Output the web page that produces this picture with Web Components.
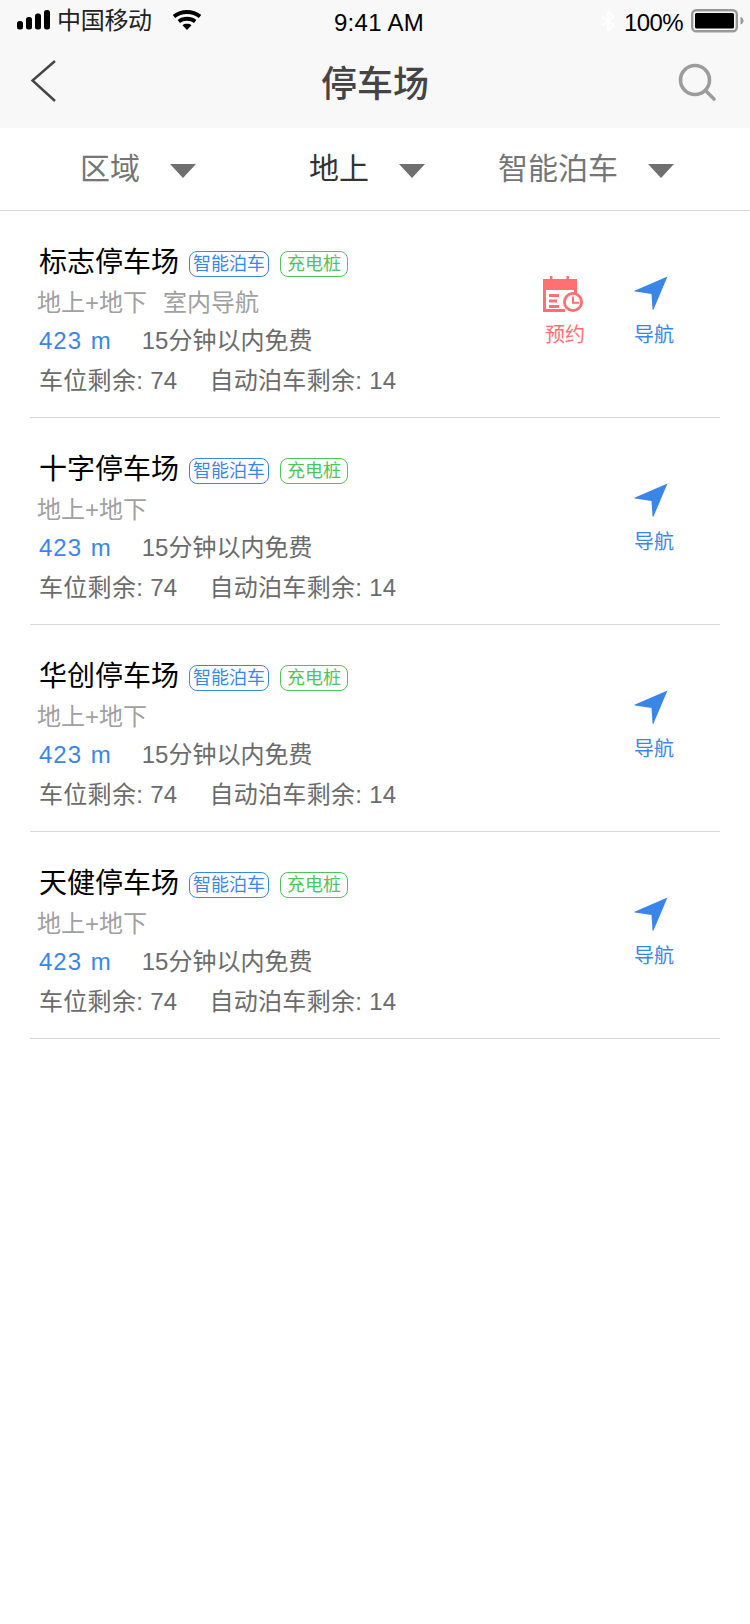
<!DOCTYPE html>
<html>
<head>
<meta charset="utf-8">
<style>
  html,body{margin:0;padding:0;background:#fff}
  body{font-family:"Liberation Sans","Noto Sans CJK SC",sans-serif;width:750px;height:1624px;overflow:hidden}
</style>
</head>
<body>
<app-header></app-header>
<filter-bar>
  <filter-item label="区域"></filter-item>
  <filter-item label="地上" dark></filter-item>
  <filter-item label="智能泊车"></filter-item>
</filter-bar>
<parking-row name="标志停车场" sub="地上+地下" extra="室内导航" book></parking-row>
<parking-row name="十字停车场" sub="地上+地下"></parking-row>
<parking-row name="华创停车场" sub="地上+地下"></parking-row>
<parking-row name="天健停车场" sub="地上+地下"></parking-row>

<script>
class appHeader extends HTMLElement{
    constructor(){
        super()
        this.attachShadow({mode:'open'});
    }
    connectedCallback(){
        this.shadowRoot.innerHTML=`
        <style>
          :host{display:block;height:128px;background:#f8f8f8;color:#000}
          .status{height:46px;display:grid;grid-template-columns:1fr auto 1fr;align-items:center;font-size:24px;padding:0 5px 0 17px}
          .left{display:flex;align-items:center}
          .carrier{margin-left:7px;font-size:24px;letter-spacing:-.3px;line-height:38px;color:#222;position:relative;top:-2px}
          .wifi{margin-left:21px;position:relative;top:-3px}
          .signal{position:relative;top:-3px}
          .time{position:relative;left:-2px;letter-spacing:.3px}
          .right{display:flex;align-items:center;justify-content:flex-end;position:relative;top:-2px}
          .pct{margin:0 8px 0 9px;letter-spacing:-.6px;position:relative;top:2px}
          .nav{height:82px;display:flex;align-items:center;justify-content:space-between;padding:0 33px 0 30px;position:relative}
          h1{position:absolute;left:0;right:0;top:19px;margin:0;text-align:center;font-size:36px;line-height:40px;font-weight:500;color:#444}
          .back{position:relative;top:-6px}
          .search{position:relative;top:-5px}
        </style>
        <div class="status">
          <div class="left">
            <svg class="signal" width="33" height="20" viewBox="0 0 33 20"><rect x="0" y="11" width="6" height="8.500" rx="2.500"/><rect x="9" y="7" width="6" height="12.500" rx="2.500"/><rect x="18" y="3.500" width="6" height="16" rx="2.500"/><rect x="27" y="0" width="6" height="19.500" rx="2.500"/></svg>
            <span class="carrier">中国移动</span>
            <svg class="wifi" width="28" height="20" viewBox="0 0 28 20"><path d="M1 6.500C8.500 .5 19.500 .5 27 6.500" fill="none" stroke="#000" stroke-width="3.800"/><path d="M5.800 11.500C10.500 7.800 17.500 7.800 22.200 11.500" fill="none" stroke="#000" stroke-width="3.800"/><path d="M9.500 15.200C12 13.400 16 13.400 18.500 15.200L14 20Z"/></svg>
          </div>
          <div class="time">9:41 AM</div>
          <div class="right">
            <svg width="14" height="20" viewBox="0 0 14 20"><path d="M1 5.500l12 9-6 5V.5l6 5-12 9" fill="none" stroke="#fff" stroke-width="1.800"/></svg>
            <span class="pct">100%</span>
            <svg width="54" height="24" viewBox="0 0 54 24"><rect x="1.200" y="1.200" width="44.600" height="21" rx="4" fill="none" stroke="#999" stroke-width="2.400"/><rect x="4" y="4" width="39" height="15.500" rx="1.500"/><path d="M49.500 8c2 .5 3 2 3 3.700s-1 3.300-3 3.800z" fill="#999"/></svg>
          </div>
        </div>
        <div class="nav">
          <svg class="back" width="28" height="44" viewBox="0 0 28 44"><path d="M25 2L2.500 21.500 25 42" fill="none" stroke="#444" stroke-width="2.400"/></svg>
          <h1>停车场</h1>
          <svg class="search" width="40" height="40" viewBox="0 0 40 40"><circle cx="18" cy="18" r="14.500" fill="none" stroke="#9c9c9c" stroke-width="3.600"/><path d="M28.500 28.500L37 37" stroke="#9c9c9c" stroke-width="3.600" stroke-linecap="round"/></svg>
        </div>`;
    }
}

class filterBar extends HTMLElement{
    constructor(){
        super()
        this.attachShadow({mode:'open'});
    }
    connectedCallback(){
        this.shadowRoot.innerHTML=`
        <style>
          :host{display:grid;grid-template-columns:309px 189px 1fr;height:82px;border-bottom:1px solid #d9d9d9}
        </style>
        <slot></slot>`;
    }
}

class filterItem extends HTMLElement{
    constructor(){
        super()
        this.attachShadow({mode:'open'});
    }
    connectedCallback(){
        const dark=this.hasAttribute('dark');
        this.shadowRoot.innerHTML=`
        <style>
          :host{display:flex;align-items:center;gap:30px;font-size:30px;color:${dark?'#333':'#757575'}}
          :host(:first-child){padding-left:80px}
          span{position:relative;top:-3px}
          i{display:block;width:0;height:0;margin-top:4px;border-left:13px solid transparent;border-right:13px solid transparent;border-top:14px solid #6f6f6f}
        </style>
        <span>${this.getAttribute('label')}</span><i></i>`;
    }
}

class tagPill extends HTMLElement{
    constructor(){
        super()
        this.attachShadow({mode:'open'});
    }
    connectedCallback(){
        const c=this.getAttribute('color');
        this.shadowRoot.innerHTML=`
        <style>
          :host{display:inline-block;box-sizing:border-box;height:26px;line-height:24px;padding:0 ${this.getAttribute('pad')}px;margin-top:7px;border:1px solid ${c};border-radius:8px;color:${c};font-size:18px;white-space:nowrap}
        </style>
        <slot></slot>`;
    }
}

class parkingRow extends HTMLElement{
    constructor(){
        super()
        this.attachShadow({mode:'open'});
    }
    connectedCallback(){
        const extra=this.getAttribute('extra');
        this.shadowRoot.innerHTML=`
        <style>
          :host{display:block;margin:0 30px;height:207px;box-sizing:border-box;border-bottom:1px solid #d9d9d9;position:relative;padding:31px 0 0 9px}
          .title{display:flex;align-items:center;gap:10px;height:36px;font-size:28px;color:#000}
          .title tag-pill:last-child{margin-left:1px}
          .sub{margin:5px 0 0 -2px;height:38px;line-height:40px;font-size:24px;color:#a0a0a0}
          .sub span{margin-left:16px}
          .line{height:40px;line-height:40px;font-size:24px;color:#6b6b6b}
          .dist{color:#3a86e8;margin-right:30px;letter-spacing:1px;word-spacing:1px}
          .slots{letter-spacing:.3px}
          .slots span+span{margin-left:32px}
          .actions{position:absolute;top:65px;right:46px;display:flex;gap:50px}
          .act{width:40px;display:flex;flex-direction:column;align-items:center;font-size:20px;line-height:26px;white-space:nowrap}
          .act svg{display:block;margin-bottom:10px}
          .book svg{margin-left:-4px;overflow:visible}
          .go svg{margin-left:-6px}
          .book{color:#ff7072}
          .go{color:#3a86e8;margin-left:-1px}
        </style>
        <div class="title"><span>${this.getAttribute('name')}</span><tag-pill color="#3a86e8" pad="3">智能泊车</tag-pill><tag-pill color="#4fc35c" pad="6">充电桩</tag-pill></div>
        <div class="sub">${this.getAttribute('sub')}${extra?`<span>${extra}</span>`:''}</div>
        <div class="line"><span class="dist">423 m</span>15分钟以内免费</div>
        <div class="line slots"><span>车位剩余: 74</span><span>自动泊车剩余: 14</span></div>
        <div class="actions">
          ${this.hasAttribute('book')?`<div class="act book">
            <svg width="40" height="36" viewBox="0 0 40 36" fill="#ff7072"><path d="M7 0h2.500v3h14V0H26v3h8v11H0V3h7z"/><path d="M0 14h3v19h19v3H0zM31 14h3v3h-3z"/><path d="M6 18h10v3H6zM6 23.500h8v3H6zM6 29h10v3H6z"/><circle cx="30" cy="26" r="8.600" fill="#fff" stroke="#ff7072" stroke-width="2.800"/><path d="M29 20.500h2v5.300h5v2h-7z"/></svg>预约</div>`:''}
          <div class="act go">
            <svg width="34" height="36" viewBox="0 0 34 36"><path d="M33.500 .5L19.500 33.500Q19 34.500 18.500 33L17.500 18 1 15.500Q-.5 15 1 14.500z" fill="#3a86e8"/></svg>导航</div>
        </div>`;
    }
}

customElements.define('app-header',appHeader);
customElements.define('filter-bar',filterBar);
customElements.define('filter-item',filterItem);
customElements.define('tag-pill',tagPill);
customElements.define('parking-row',parkingRow);
</script>
</body>
</html>
